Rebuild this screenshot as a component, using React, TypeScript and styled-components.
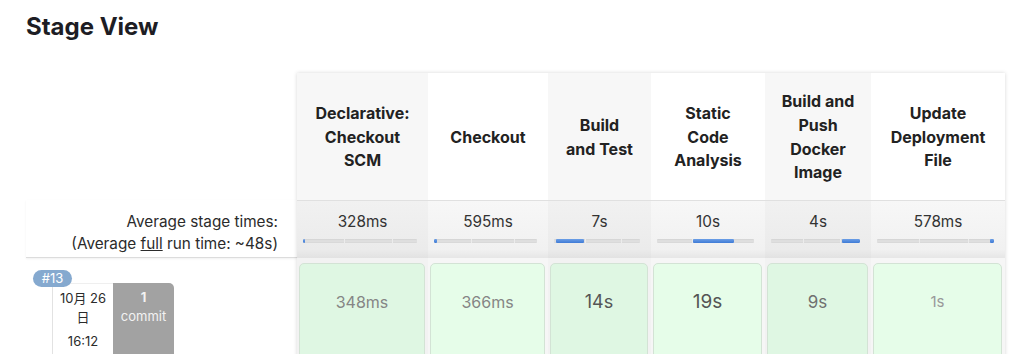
import React from "react";
import styled, { createGlobalStyle } from "styled-components";

const GlobalStyle = createGlobalStyle`
  body {
    margin: 0;
    background: #fff;
    font-family: Inter, "Noto Sans CJK SC", sans-serif;
    color: #222;
  }
`;

type Stage = {
  name: string[];
  width: number;
  avg: string;
  fillLeft: number;
  fillWidth: number;
  run: string;
  runSize: number;
  runColor: string;
};

const stages: Stage[] = [
  { name: ["Declarative:", "Checkout", "SCM"], width: 131, avg: "328ms", fillLeft: 0, fillWidth: 1.5, run: "348ms", runSize: 16, runColor: "#858585" },
  { name: ["Checkout"], width: 120, avg: "595ms", fillLeft: 0, fillWidth: 2.5, run: "366ms", runSize: 16, runColor: "#858585" },
  { name: ["Build", "and Test"], width: 103, avg: "7s", fillLeft: 2, fillWidth: 33, run: "14s", runSize: 18, runColor: "#555" },
  { name: ["Static", "Code", "Analysis"], width: 114, avg: "10s", fillLeft: 37, fillWidth: 42, run: "19s", runSize: 19, runColor: "#555" },
  { name: ["Build and", "Push", "Docker", "Image"], width: 106, avg: "4s", fillLeft: 80, fillWidth: 20, run: "9s", runSize: 17, runColor: "#707070" },
  { name: ["Update", "Deployment", "File"], width: 134, avg: "578ms", fillLeft: 97, fillWidth: 3, run: "1s", runSize: 15, runColor: "#999" },
];

const Page = styled.div`
  padding-left: 26px;
`;

const Title = styled.h2`
  margin: 12px 0 32px;
  font-size: 24px;
  line-height: 29px;
  font-weight: 700;
  color: #1d1d24;
`;

const Board = styled.div`
  display: flex;
  align-items: flex-start;
`;

const LeftColumn = styled.div`
  width: 271px;
  display: flex;
  flex-direction: column;
`;

const BlankHead = styled.div`
  height: 127px;
`;

const AvgLabel = styled.div`
  box-sizing: border-box;
  height: 58px;
  padding: 11px 19px 0 0;
  text-align: right;
  font-size: 15.3px;
  line-height: 22px;
  color: #2b2b2b;
  border-bottom: 1px solid #dcdcdc;
  box-shadow: 0 1px 2px rgba(0, 0, 0, 0.06);

  a {
    color: inherit;
    text-decoration: underline;
  }
`;

const BuildInfo = styled.div`
  position: relative;
  height: 100px;
  padding: 25px 0 0 26px;
  box-sizing: border-box;
  display: flex;
`;

const Badge = styled.span`
  position: absolute;
  left: 7px;
  top: 12px;
  width: 39px;
  height: 17px;
  border-radius: 9px;
  background: #85a9cf;
  color: #fff;
  font-size: 13px;
  line-height: 17px;
  text-align: center;
  z-index: 1;
`;

const DateBox = styled.div`
  width: 61px;
  box-sizing: border-box;
  padding-top: 5px;
  border-left: 1px solid #e2e2e2;
  border-top: 1px solid #efefef;
  text-align: center;
  font-size: 13px;
  line-height: 19px;
  color: #2b2b2b;
`;

const TimeLine = styled.div`
  margin-top: 5px;
`;

const CommitBox = styled.div`
  width: 61px;
  padding-top: 5px;
  background: #a2a2a2;
  border-top-right-radius: 5px;
  text-align: center;
  font-size: 13px;
  line-height: 19px;
  color: #f2f2f2;

  strong {
    display: block;
    font-weight: 700;
  }
`;

const Stages = styled.div<{ $cols: string }>`
  display: grid;
  grid-template-columns: ${(p) => p.$cols};
  grid-template-rows: 127px 58px 100px;
  box-shadow: 0 0 4px rgba(0, 0, 0, 0.16);
`;

const HeadCell = styled.div<{ $odd: boolean }>`
  display: flex;
  align-items: center;
  justify-content: center;
  padding-top: 2px;
  text-align: center;
  background: ${(p) => (p.$odd ? "#f7f7f7" : "#fff")};
  font-size: 16px;
  line-height: 23.7px;
  font-weight: 700;
  color: #222;
`;

const AvgCell = styled.div<{ $odd: boolean }>`
  box-sizing: border-box;
  padding-top: 11px;
  border-top: 1px solid #e0e0e0;
  background: ${(p) =>
    p.$odd
      ? "linear-gradient(#f1f1f1, #ebebeb 85%, #e2e2e2)"
      : "linear-gradient(#f7f7f7, #f1f1f1 85%, #e6e6e6)"};
  text-align: center;
  font-size: 15.3px;
  line-height: 20px;
  color: #333;
`;

const Bar = styled.div`
  position: relative;
  height: 4px;
  margin: 7px 11px 0 6px;
  background: linear-gradient(#d2d2d2, #e2e2e2 50%, #d6d6d6);
  border-radius: 1px;
  overflow: hidden;
`;

const Tick = styled.span<{ $at: number }>`
  position: absolute;
  top: 0;
  bottom: 0;
  left: ${(p) => p.$at}%;
  width: 1px;
  background: #ececec;
`;

const Fill = styled.span`
  position: absolute;
  top: 0;
  bottom: 0;
  background: linear-gradient(#6b9ee6, #3f7bd6);
  border-radius: 1px;
`;

const RunCell = styled.div<{ $odd: boolean }>`
  box-sizing: border-box;
  padding: 5px 3px 0 2px;
  background: ${(p) => (p.$odd ? "#f2f2f2" : "#f6f6f6")};
  overflow: hidden;
`;

const RunBox = styled.div<{ $odd: boolean; $size: number; $color: string }>`
  height: 110px;
  box-sizing: border-box;
  padding-top: 26px;
  border: 1px solid #d3e3d5;
  border-radius: 5px;
  background: ${(p) => (p.$odd ? "#dff7e3" : "#e6fde9")};
  text-align: center;
  font-size: ${(p) => p.$size}px;
  line-height: 24px;
  color: ${(p) => p.$color};
`;

const App = () => {
  const cols = stages.map((s) => `${s.width}px`).join(" ");

  return (
    <Page>
      <GlobalStyle />
      <Title>Stage View</Title>
      <Board>
        <LeftColumn>
          <BlankHead />
          <AvgLabel>
            Average stage times:
            <br />
            (Average <a href="#">full</a> run time: ~48s)
          </AvgLabel>
          <BuildInfo>
            <Badge>#13</Badge>
            <DateBox>
              10月 26
              <br />日
              <TimeLine>16:12</TimeLine>
            </DateBox>
            <CommitBox>
              <strong>1</strong>
              commit
            </CommitBox>
          </BuildInfo>
        </LeftColumn>

        <Stages $cols={cols}>
          {stages.map((s, i) => (
            <HeadCell key={`h${i}`} $odd={i % 2 === 0}>
              <div>
                {s.name.map((line) => (
                  <div key={line}>{line}</div>
                ))}
              </div>
            </HeadCell>
          ))}
          {stages.map((s, i) => (
            <AvgCell key={`a${i}`} $odd={i % 2 === 0}>
              {s.avg}
              <Bar>
                <Tick $at={36} />
                <Tick $at={78} />
                <Fill style={{ left: `${s.fillLeft}%`, width: `${s.fillWidth}%` }} />
              </Bar>
            </AvgCell>
          ))}
          {stages.map((s, i) => (
            <RunCell key={`r${i}`} $odd={i % 2 === 0}>
              <RunBox $odd={i % 2 === 0} $size={s.runSize} $color={s.runColor}>
                {s.run}
              </RunBox>
            </RunCell>
          ))}
        </Stages>
      </Board>
    </Page>
  );
};

export default App;
